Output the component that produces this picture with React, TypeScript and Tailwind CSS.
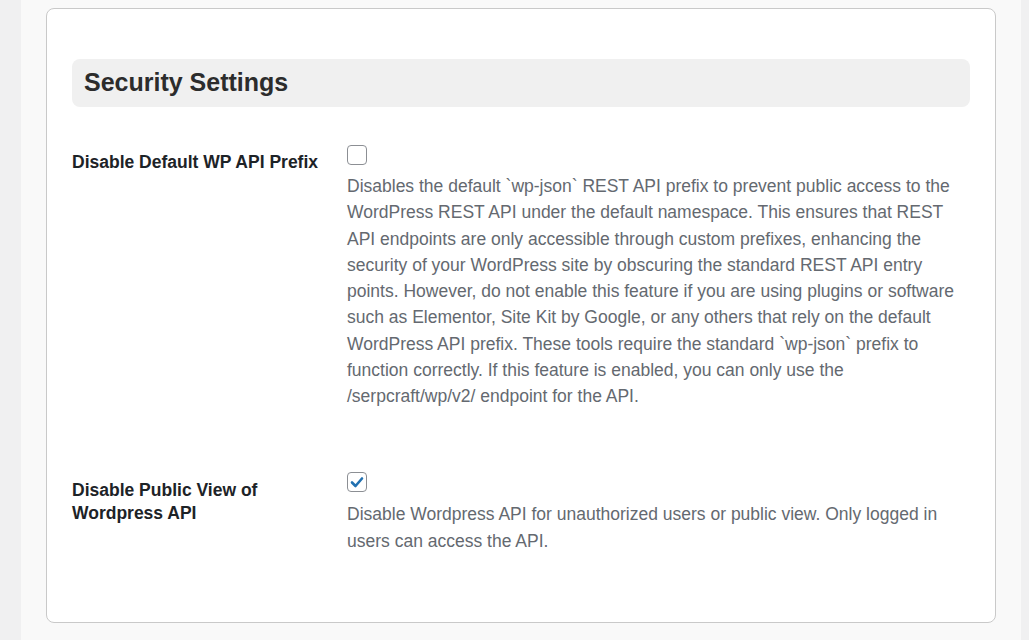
import React from "react";

function Checkbox({ checked }: { checked?: boolean }) {
  return (
    <div className="w-[20px] h-[20px] rounded-[4px] border border-[#8c8f94] bg-white flex items-center justify-center">
      {checked && (
        <svg width="16" height="16" viewBox="0 0 16 16">
          <path d="M3 8.5 L6.5 12 L13 4.5" fill="none" stroke="#2271b1" strokeWidth="2.6" strokeLinecap="round" strokeLinejoin="round" />
        </svg>
      )}
    </div>
  );
}

export default function App() {
  return (
    <div className="w-[1029px] h-[640px] bg-[#f0f0f1] overflow-hidden" style={{ fontFamily: '"Liberation Sans", Arial, sans-serif' }}>
      <div className="ml-[21px] w-[1000px] h-full bg-[#f9f9f9] px-[25px] pt-[8px]">
        <div className="bg-white border border-[#c9c9c9] rounded-[8px] px-[25px] pt-[50px] h-[615px]">
          <div className="h-[48px] bg-[#f0f0f0] rounded-[8px] flex items-center px-[12px] pb-[2px]">
            <h2 className="text-[25px] font-bold text-[#2c2c2c] leading-none">Security Settings</h2>
          </div>
          <div className="grid grid-cols-[275px_1fr] mt-[38px]">
            <div className="pt-[6px] pr-[10px] text-[17.5px] font-bold text-[#1d2327] leading-[23px]">Disable Default WP API Prefix</div>
            <div>
              <Checkbox />
              <p className="mt-[8px] text-[17.5px] text-[#646970] leading-[26.25px]">
                Disables the default `wp-json` REST API prefix to prevent public access to the WordPress REST API under the default namespace. This ensures that REST API endpoints are only accessible through custom prefixes, enhancing the security of your WordPress site by obscuring the standard REST API entry points. However, do not enable this feature if you are using plugins or software such as Elementor, Site Kit by Google, or any others that rely on the default WordPress API prefix. These tools require the standard `wp-json` prefix to function correctly. If this feature is enabled, you can only use the /serpcraft/wp/v2/ endpoint for the API.
              </p>
            </div>
            <div className="pt-[7px] pr-[10px] mt-[63px] text-[17.5px] font-bold text-[#1d2327] leading-[23px]">Disable Public View of Wordpress API</div>
            <div className="mt-[63px]">
              <Checkbox checked />
              <p className="mt-[9px] text-[17.5px] text-[#646970] leading-[26.25px]">
                Disable Wordpress API for unauthorized users or public view. Only logged in users can access the API.
              </p>
            </div>
          </div>
        </div>
      </div>
    </div>
  );
}
